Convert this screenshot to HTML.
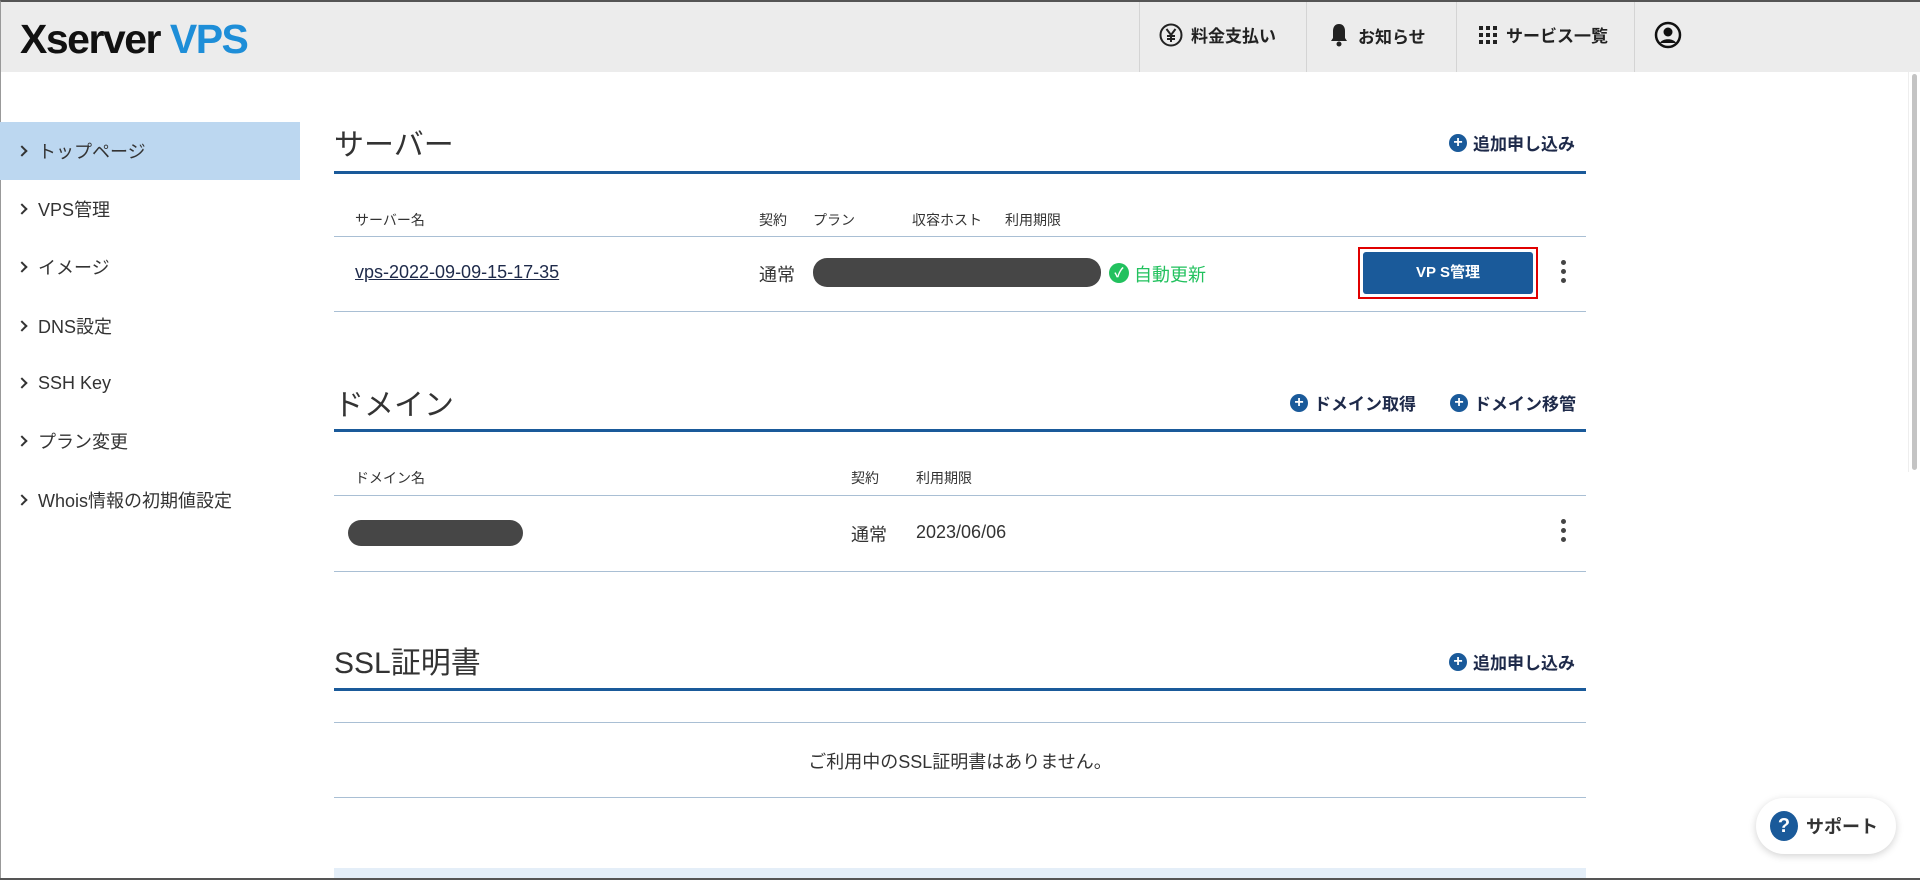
<!DOCTYPE html>
<html><head><meta charset="utf-8"><style>
*{margin:0;padding:0;box-sizing:border-box}
body{width:1920px;height:880px;overflow:hidden;background:#fff;font-family:"Liberation Sans","Noto Sans CJK JP",sans-serif;color:#333;position:relative}
.a{position:absolute;white-space:nowrap}
.hdr{left:0;top:0;width:1920px;height:72px;background:#ececec;border-top:2px solid #555;border-left:1px solid #999}
.sep{top:2px;width:1px;height:70px;background:#d4d4d4}
.nav{top:22px;font-size:17px;font-weight:bold;color:#222;display:flex;align-items:center;gap:8px}
.side{left:0;width:300px;height:58px;font-size:18px;color:#333;padding-left:18px;display:flex;align-items:center}
.side span.c{display:inline-block;width:8px;height:8px;border-right:2px solid #333;border-top:2px solid #333;transform:rotate(45deg);margin-right:12px}
.h2{left:334px;font-size:30px;color:#333}
.bl{left:334px;width:1252px;height:3px;background:#1a5a9a}
.ln{left:334px;width:1252px;height:1px;background:#a9bfd4}
.th{font-size:14px;color:#333}
.td{font-size:18px;color:#333}
.add{font-size:17px;font-weight:bold;color:#1e2a4a;display:flex;align-items:center;gap:6px}
.plus{width:18px;height:18px;border-radius:50%;background:#1a5a9a;color:#fff;font-size:16px;line-height:18px;text-align:center;font-weight:bold}
.pill{background:#464646;border-radius:14px}
.keb{width:5px}
.keb i{display:block;width:5px;height:5px;border-radius:50%;background:#444;margin-bottom:4px}
</style></head><body>
<div class="a hdr"></div>
<div class="a" style="left:20px;top:16px;font-size:41px;font-weight:bold;letter-spacing:-1.5px;color:#111">Xserver <span style="color:#1e8ed8">VPS</span></div>
<div class="a sep" style="left:1139px"></div><div class="a sep" style="left:1306px"></div><div class="a sep" style="left:1456px"></div><div class="a sep" style="left:1634px"></div>
<div class="a nav" style="left:1159px"><svg width="24" height="24" viewBox="0 0 24 24"><circle cx="12" cy="12" r="10.5" fill="none" stroke="#222" stroke-width="2"/><path d="M7.5 6l4.5 6 4.5-6M12 12v7M8 13h8M8 16h8" stroke="#222" stroke-width="2" fill="none"/></svg>料金支払い</div>
<div class="a nav" style="left:1328px"><svg width="22" height="26" viewBox="0 0 22 26"><path d="M11 2c-4 0-6 3-6 7v7l-2 3h16l-2-3V9c0-4-2-7-6-7z" fill="#222"/><circle cx="11" cy="22" r="2.5" fill="#222"/></svg>お知らせ</div>
<div class="a nav" style="left:1478px"><svg width="20" height="20" viewBox="0 0 20 20" fill="#222"><rect x="1" y="1" width="4" height="4"/><rect x="8" y="1" width="4" height="4"/><rect x="15" y="1" width="4" height="4"/><rect x="1" y="8" width="4" height="4"/><rect x="8" y="8" width="4" height="4"/><rect x="15" y="8" width="4" height="4"/><rect x="1" y="15" width="4" height="4"/><rect x="8" y="15" width="4" height="4"/><rect x="15" y="15" width="4" height="4"/></svg>サービス一覧</div>
<div class="a" style="left:1654px;top:21px"><svg width="28" height="28" viewBox="0 0 28 28"><circle cx="14" cy="14" r="12" fill="none" stroke="#111" stroke-width="2.5"/><circle cx="14" cy="11" r="4.5" fill="#111"/><path d="M6 22c2-5 14-5 16 0" fill="#111"/></svg></div>
<div class="a" style="left:1908px;top:72px;width:12px;height:400px;background:#fff;border-left:1px solid #eee"></div>
<div class="a" style="left:1912px;top:74px;width:5px;height:396px;background:#c4c4c4;border-radius:3px"></div>
<div class="a" style="left:0;top:72px;width:1px;height:808px;background:#999"></div>

<div class="a side" style="top:122px;background:#bcd7f0"><span class="c"></span>トップページ</div>
<div class="a side" style="top:180px"><span class="c"></span>VPS管理</div>
<div class="a side" style="top:238px"><span class="c"></span>イメージ</div>
<div class="a side" style="top:297px"><span class="c"></span>DNS設定</div>
<div class="a side" style="top:354px"><span class="c"></span>SSH Key</div>
<div class="a side" style="top:412px"><span class="c"></span>プラン変更</div>
<div class="a side" style="top:471px"><span class="c"></span>Whois情報の初期値設定</div>

<div class="a h2" style="top:120px">サーバー</div>
<div class="a add" style="left:1449px;top:130px"><div class="plus">+</div>追加申し込み</div>
<div class="a bl" style="top:171px"></div>
<div class="a th" style="left:355px;top:210px">サーバー名</div>
<div class="a th" style="left:759px;top:210px">契約</div>
<div class="a th" style="left:813px;top:210px">プラン</div>
<div class="a th" style="left:912px;top:210px">収容ホスト</div>
<div class="a th" style="left:1005px;top:210px">利用期限</div>
<div class="a ln" style="top:236px"></div>
<div class="a td" style="left:355px;top:262px;text-decoration:underline;color:#1e2a4a">vps-2022-09-09-15-17-35</div>
<div class="a td" style="left:759px;top:261px">通常</div>
<div class="a pill" style="left:813px;top:258px;width:288px;height:29px"></div>
<div class="a" style="left:1109px;top:263px;width:20px;height:20px;border-radius:50%;background:#22c15e;color:#fff;font-size:13px;text-align:center;line-height:20px;font-weight:bold">✓</div>
<div class="a td" style="left:1134px;top:261px;color:#22c15e">自動更新</div>
<div class="a" style="left:1358px;top:247px;width:180px;height:52px;border:2px solid #e00000"></div>
<div class="a" style="left:1363px;top:252px;width:170px;height:42px;background:#1a5a9a;border-radius:3px;color:#fff;font-size:15px;font-weight:bold;text-align:center;line-height:42px">VP S管理</div>
<div class="a keb" style="left:1561px;top:260px"><i></i><i></i><i></i></div>
<div class="a ln" style="top:311px"></div>

<div class="a h2" style="top:380px">ドメイン</div>
<div class="a add" style="left:1290px;top:390px"><div class="plus">+</div>ドメイン取得</div>
<div class="a add" style="left:1450px;top:390px"><div class="plus">+</div>ドメイン移管</div>
<div class="a bl" style="top:429px"></div>
<div class="a th" style="left:355px;top:468px">ドメイン名</div>
<div class="a th" style="left:851px;top:468px">契約</div>
<div class="a th" style="left:916px;top:468px">利用期限</div>
<div class="a ln" style="top:495px"></div>
<div class="a pill" style="left:348px;top:520px;width:175px;height:26px"></div>
<div class="a td" style="left:851px;top:521px">通常</div>
<div class="a td" style="left:916px;top:522px">2023/06/06</div>
<div class="a keb" style="left:1561px;top:519px"><i></i><i></i><i></i></div>
<div class="a ln" style="top:571px"></div>

<div class="a h2" style="top:638px">SSL証明書</div>
<div class="a add" style="left:1449px;top:649px"><div class="plus">+</div>追加申し込み</div>
<div class="a bl" style="top:688px"></div>
<div class="a ln" style="top:722px"></div>
<div class="a td" style="left:334px;width:1252px;text-align:center;top:748px">ご利用中のSSL証明書はありません。</div>
<div class="a ln" style="top:797px"></div>
<div class="a" style="left:334px;top:868px;width:1252px;height:12px;background:#e4eef8"></div>
<div class="a" style="left:0;top:878px;width:1920px;height:2px;background:#555"></div>

<div class="a" style="left:1756px;top:798px;width:140px;height:56px;background:#fff;border-radius:28px;box-shadow:0 2px 8px rgba(0,0,0,.18);display:flex;align-items:center;padding-left:14px;gap:8px;font-size:18px;font-weight:bold;color:#333"><div style="width:28px;height:30px;border-radius:50%;background:#1a5a9a;color:#fff;text-align:center;line-height:30px;font-size:20px">?</div>サポート</div>
</body></html>
